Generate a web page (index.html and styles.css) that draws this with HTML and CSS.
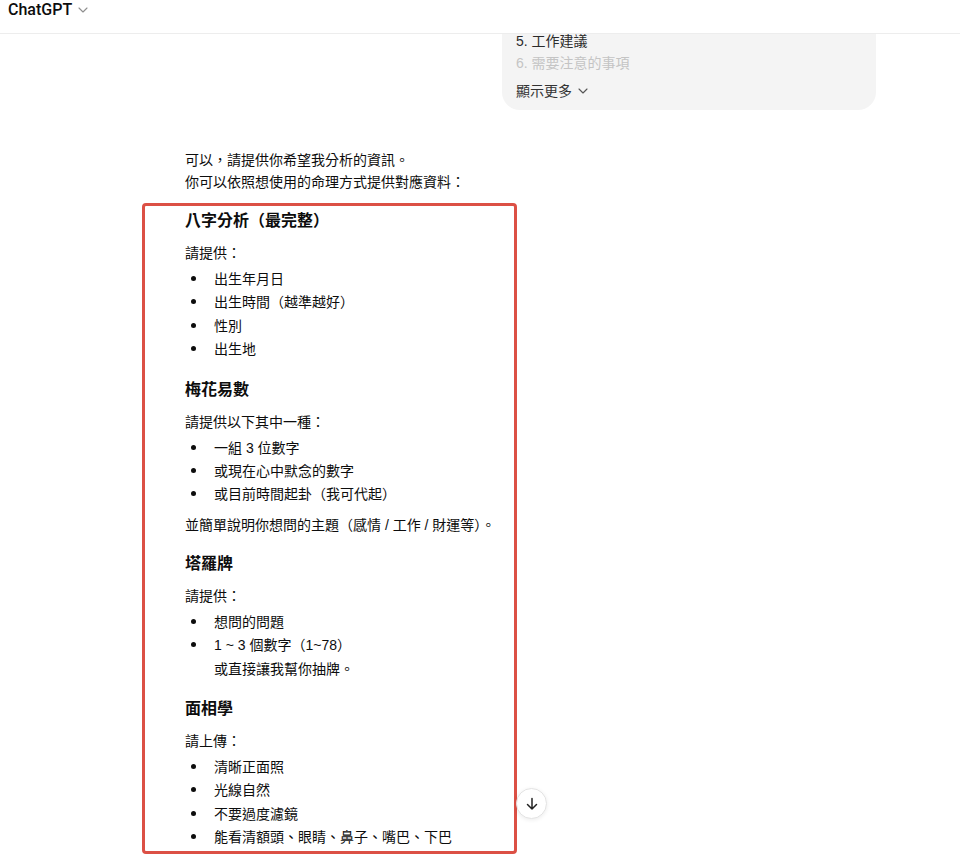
FILE: index.html
```html
<!DOCTYPE html>
<html lang="zh-Hant">
<head>
<meta charset="utf-8">
<title>ChatGPT</title>
<link rel="stylesheet" href="styles.css">
</head>
<body>
<header class="topbar">
  <span class="brand">ChatGPT</span>
  <svg class="brand-chev" width="10" height="6" viewBox="0 0 10 6"><path d="M1 1l4 4 4-4" fill="none" stroke="#8f8f8f" stroke-width="1.1" stroke-linecap="round" stroke-linejoin="round"/></svg>
</header>
<main class="thread">
  <div class="bubble">
    <div class="bubble-line">5. 工作建議</div>
    <div class="bubble-line faded">6. 需要注意的事項</div>
    <div class="more">顯示更多 <svg width="10" height="6" viewBox="0 0 10 6"><path d="M1 1l4 4 4-4" fill="none" stroke="#555" stroke-width="1.1" stroke-linecap="round" stroke-linejoin="round"/></svg></div>
  </div>
  <div class="answer">
    <p class="line">可以，請提供你希望我分析的資訊。</p>
    <p class="line">你可以依照想使用的命理方式提供對應資料：</p>
    <div class="annot">
      <h3 class="first">八字分析（最完整）</h3>
      <p class="lead">請提供：</p>
      <ul>
        <li>出生年月日</li>
        <li>出生時間（越準越好）</li>
        <li>性別</li>
        <li>出生地</li>
      </ul>
      <h3>梅花易數</h3>
      <p class="lead">請提供以下其中一種：</p>
      <ul>
        <li>一組 3 位數字</li>
        <li>或現在心中默念的數字</li>
        <li>或目前時間起卦（我可代起）</li>
      </ul>
      <p class="after">並簡單說明你想問的主題（感情 / 工作 / 財運等）。</p>
      <h3>塔羅牌</h3>
      <p class="lead">請提供：</p>
      <ul>
        <li>想問的問題</li>
        <li>1 ~ 3 個數字（1~78）<br>或直接讓我幫你抽牌。</li>
      </ul>
      <h3>面相學</h3>
      <p class="lead">請上傳：</p>
      <ul>
        <li>清晰正面照</li>
        <li>光線自然</li>
        <li>不要過度濾鏡</li>
        <li>能看清額頭、眼睛、鼻子、嘴巴、下巴</li>
      </ul>
    </div>
  </div>
</main>
<button class="scroll-btn" aria-label="scroll down">
  <svg width="16" height="16" viewBox="0 0 16 16"><path d="M8 2.5v10.5M3.5 8.5L8 13l4.5-4.5" fill="none" stroke="#222" stroke-width="1.5" stroke-linecap="round" stroke-linejoin="round"/></svg>
</button>
</body>
</html>
```
FILE: styles.css
```css
html, body {
  margin: 0;
  padding: 0;
  height: 858px;
  overflow: hidden;
  background: #fff;
}
body {
  font-family: "Liberation Sans", "Noto Sans CJK TC", sans-serif;
  font-size: 14px;
  color: #0d0d0d;
}
.topbar {
  position: fixed;
  top: 0;
  left: 0;
  right: 0;
  height: 33px;
  background: #fff;
  border-bottom: 1px solid #ededed;
  display: flex;
  align-items: flex-start;
  padding-left: 8px;
  z-index: 5;
}
.brand {
  font-family: Roboto, "Liberation Sans", sans-serif;
  font-weight: 500;
  font-size: 16px;
  line-height: 20px;
  color: #0d0d0d;
}
.brand-chev {
  margin-left: 6px;
  margin-top: 7px;
}
.thread {
  margin-left: 185px;
  width: 691px;
}
.bubble {
  margin-left: auto;
  width: 374px;
  box-sizing: border-box;
  background: #f4f4f4;
  border-radius: 0 0 18px 18px;
  padding: 30px 14px 8px;
}
.bubble-line {
  line-height: 22px;
  color: #2b2b2b;
}
.bubble-line.faded {
  color: #c4c4c4;
}
.more {
  margin-top: 6px;
  line-height: 22px;
  color: #333;
  display: flex;
  align-items: center;
  gap: 6px;
}
.answer {
  margin-top: 39px;
}
.line {
  margin: 0;
  line-height: 22px;
}
.annot {
  margin-top: 10px;
  margin-left: -43px;
  width: 375px;
  box-sizing: border-box;
  border: 3px solid #dc5045;
  border-radius: 4px;
  padding: 3px 0 1px 40px;
}
h3 {
  margin: 16px 0 9px;
  font-size: 16px;
  font-weight: 700;
  line-height: 24px;
}
h3.first {
  margin-top: 0;
}
.lead {
  margin: 0 0 4px;
  line-height: 22px;
}
.after {
  margin: 7px 0 0;
  line-height: 22px;
  white-space: nowrap;
}
ul {
  list-style: none;
  margin: 0;
  padding: 0 0 0 29px;
}
li {
  line-height: 23.4px;
}
li::before {
  content: "";
  display: inline-block;
  width: 5px;
  height: 5px;
  border-radius: 50%;
  background: #0d0d0d;
  margin-left: -23px;
  margin-right: 18px;
  vertical-align: 3px;
}
.scroll-btn {
  position: fixed;
  left: 516px;
  top: 788px;
  width: 31px;
  height: 31px;
  border-radius: 50%;
  background: #fff;
  border: 1px solid #e3e3e3;
  box-shadow: 0 1px 4px rgba(0,0,0,0.08);
  display: flex;
  align-items: center;
  justify-content: center;
  padding: 0;
  z-index: 4;
}
```
